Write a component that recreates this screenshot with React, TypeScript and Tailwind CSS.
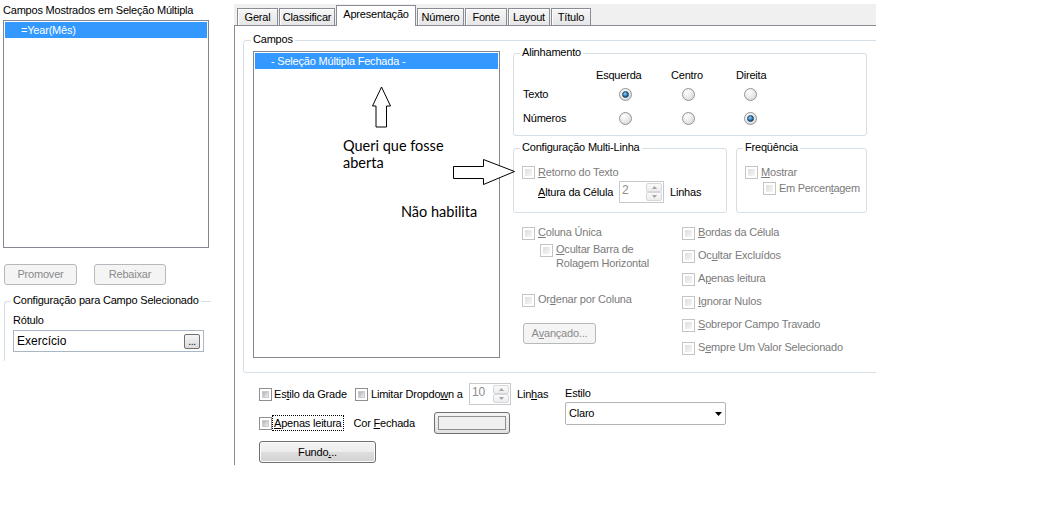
import type { ReactNode } from 'react';

const gray = 'text-[#7b7b7b]';

function Check({ off = false }: { off?: boolean }) {
  return (
    <span
      className={`flex w-[13px] h-[13px] shrink-0 border p-[2px] bg-white ${
        off ? 'border-[#c4c4c4]' : 'border-[#8e8f8f]'
      }`}
    >
      <span
        className={`flex-1 ${
          off
            ? 'bg-[linear-gradient(135deg,#dedede,#f6f6f6)]'
            : 'bg-[linear-gradient(135deg,#aeb2b7,#eeeeee)] border border-[#c8cbcf]'
        }`}
      />
    </span>
  );
}

function Radio({ on = false }: { on?: boolean }) {
  return (
    <span className="flex items-center justify-center w-[13px] h-[13px] shrink-0 rounded-full border border-[#939393] bg-[radial-gradient(circle_at_35%_30%,#ffffff,#d2d2d2)]">
      {on && (
        <span className="w-[7px] h-[7px] rounded-full border border-[#17456b] bg-[radial-gradient(circle_at_40%_35%,#8fd6ff,#0d5a97_70%)]" />
      )}
    </span>
  );
}

function Btn({ children, off = false, className = '' }: { children: ReactNode; off?: boolean; className?: string }) {
  return (
    <div
      className={`flex items-center justify-center rounded-[3px] border leading-[13px] ${
        off
          ? 'border-[#b5b9bc] bg-[#f4f4f4] text-[#8a8a8a]'
          : 'border-[#707070] bg-[linear-gradient(to_bottom,#f4f4f4,#ececec_50%,#dedede_50%,#d2d2d2)] shadow-[inset_0_0_0_1px_#fbfbfb]'
      } ${className}`}
    >
      {children}
    </div>
  );
}

function Spin({ value, className = '' }: { value: string; className?: string }) {
  return (
    <div className={`flex shrink-0 border border-[#c6cacf] bg-white ${className}`}>
      <span className="flex-1 pl-[2px] pt-[1px] text-[12px] leading-[14px] text-[#8d8d8d]">{value}</span>
      <div className="flex flex-col w-[17px] py-[1px] pr-[1px]">
        <span className="flex-1 flex items-center justify-center border border-[#d6d8db] rounded-[2px] bg-[linear-gradient(#fafafa,#ececec)]">
          <svg width="5" height="3" viewBox="0 0 5 3">
            <path d="M0 3L2.5 0L5 3Z" fill="#a4a4a4" />
          </svg>
        </span>
        <span className="flex-1 flex items-center justify-center border border-[#d6d8db] rounded-[2px] bg-[linear-gradient(#fafafa,#ececec)]">
          <svg width="5" height="3" viewBox="0 0 5 3">
            <path d="M0 0L2.5 3L5 0Z" fill="#a4a4a4" />
          </svg>
        </span>
      </div>
    </div>
  );
}

function Group({
  label,
  className = '',
  legendLeft = 'left-[6px]',
  children,
}: {
  label: string;
  className?: string;
  legendLeft?: string;
  children?: ReactNode;
}) {
  return (
    <div className={`relative shrink-0 border border-[#d5dfe5] rounded-[3px] ${className}`}>
      <span className={`absolute -top-[8px] ${legendLeft} bg-white px-[2px] leading-[13px]`}>{label}</span>
      {children}
    </div>
  );
}

function CheckRow({ children, className = '' }: { children: ReactNode; className?: string }) {
  return (
    <div className={`flex items-start h-[13px] ${className}`}>
      <Check off />
      <span className={`ml-[3px] leading-[11px] whitespace-nowrap ${gray}`}>{children}</span>
    </div>
  );
}

const tabs = [
  { label: 'Geral', w: 'w-[41px]' },
  { label: 'Classificar', w: 'w-[56px]' },
  { label: 'Apresentação', w: 'w-[80px]', active: true },
  { label: 'Número', w: 'w-[47px]' },
  { label: 'Fonte', w: 'w-[42px]' },
  { label: 'Layout', w: 'w-[42px]' },
  { label: 'Título', w: 'w-[40px]' },
];

export default function App() {
  return (
    <div className="relative flex w-[1039px] h-[529px] overflow-hidden bg-white text-black text-[11px] tracking-[-0.2px] font-['Liberation_Sans',Arial,sans-serif]">
      {/* Left: fields shown */}
      <div className="w-[211px] shrink-0 overflow-hidden flex flex-col">
        <p className="mt-[3px] pl-[3px] leading-[14px] whitespace-nowrap">Campos Mostrados em Seleção Múltipla</p>
        <div className="mt-[3px] ml-[3px] w-[206px] h-[228px] border border-[#828790] p-[1px]">
          <div className="h-[16px] bg-[#3399ff] text-white pl-[16px] leading-[16px]">=Year(Mês)</div>
        </div>
        <div className="flex mt-[16px]">
          <Btn off className="ml-[4px] w-[73px] h-[21px]">Promover</Btn>
          <Btn off className="ml-[17px] w-[72px] h-[21px]">Rebaixar</Btn>
        </div>
        <div className="relative mt-[16px] ml-[4px] w-[230px] h-[60px] border-l border-t border-[#d5dfe5] rounded-tl-[3px]">
          <span className="absolute -top-[8px] left-[6px] bg-white px-[2px] leading-[13px] whitespace-nowrap">
            Configuração para Campo Selecionado
          </span>
          <p className="pt-[12px] pl-[8px] leading-[13px]">Rótulo</p>
          <div className="mt-[3px] ml-[8px] w-[191px] h-[22px] border border-[#a9b6c4] flex items-center">
            <span className="pl-[3px] text-[12px] tracking-normal">Exercício</span>
            <div className="ml-auto mr-[3px] w-[16px] h-[15px] rounded-[2px] border border-[#707070] bg-[linear-gradient(#f4f4f4,#dcdcdc)] flex items-end justify-center text-[10px] leading-[10px] pb-[1px]">
              ...
            </div>
          </div>
        </div>
      </div>

      {/* Right: tab control */}
      <div className="ml-[23px] w-[642px] shrink-0 flex flex-col pt-[4px]">
        <div className="flex items-end gap-[1px] h-[22px] pl-[3px] bg-[#f0f0f0] border-b border-[#898c95]">
          {tabs.map((t) =>
            t.active ? (
              <div
                key={t.label}
                className={`${t.w} relative z-10 h-[21px] -mb-px flex items-center justify-center pb-[3px] bg-white border border-b-0 border-[#898c95]`}
              >
                {t.label}
              </div>
            ) : (
              <div
                key={t.label}
                className={`${t.w} h-[17px] flex items-center justify-center border border-b-0 border-[#898c95] bg-[linear-gradient(to_bottom,#f6f6f6,#e6e6e6)] shadow-[inset_1px_1px_0_#ffffff]`}
              >
                {t.label}
              </div>
            )
          )}
        </div>

        <div className="h-[439px] border-l border-[#898c95] overflow-hidden flex flex-col">
          <Group label="Campos" legendLeft="left-[7px]" className="mt-[14px] ml-[8px] w-[700px] h-[333px]">
            <div className="flex items-start">
              <div className="mt-[10px] ml-[9px] w-[247px] h-[307px] shrink-0 border border-[#828790] p-[1px]">
                <div className="h-[16px] bg-[#3399ff] text-white pl-[16px] leading-[16px]">- Seleção Múltipla Fechada -</div>
              </div>

              <div className="ml-[13px] mt-[12px] flex flex-col">
                <Group label="Alinhamento" className="w-[354px] h-[83px]">
                  <div className="flex pt-[15px] pl-[82px] leading-[13px]">
                    <span className="w-[75px]">Esquerda</span>
                    <span className="w-[65px]">Centro</span>
                    <span>Direita</span>
                  </div>
                  <div className="flex items-center mt-[6px] pl-[9px] h-[13px]">
                    <span className="w-[96px]">Texto</span>
                    <Radio on />
                    <span className="ml-[50px]"><Radio /></span>
                    <span className="ml-[49px]"><Radio /></span>
                  </div>
                  <div className="flex items-center mt-[11px] pl-[9px] h-[13px]">
                    <span className="w-[96px]">Números</span>
                    <Radio />
                    <span className="ml-[50px]"><Radio /></span>
                    <span className="ml-[49px]"><Radio on /></span>
                  </div>
                </Group>

                <div className="flex mt-[12px]">
                  <Group label="Configuração Multi-Linha" className="w-[214px] h-[65px]">
                    <div className="flex items-center pt-[17px] pl-[8px]">
                      <Check off />
                      <span className={`ml-[3px] leading-[13px] ${gray}`}>
                        <u>R</u>etorno do Texto
                      </span>
                    </div>
                    <div className="flex items-center mt-[2px] pl-[24px]">
                      <span className="w-[81px] whitespace-nowrap">
                        <u>A</u>ltura da Célula
                      </span>
                      <Spin value="2" className="w-[45px] h-[22px]" />
                      <span className="ml-[6px]">Linhas</span>
                    </div>
                  </Group>
                  <Group label="Freqüência" className="ml-[9px] w-[131px] h-[65px]">
                    <div className="flex items-center pt-[17px] pl-[8px]">
                      <Check off />
                      <span className={`ml-[3px] leading-[13px] ${gray}`}>
                        <u>M</u>ostrar
                      </span>
                    </div>
                    <div className="flex items-center mt-[3px] pl-[26px]">
                      <Check off />
                      <span className={`ml-[3px] leading-[13px] whitespace-nowrap tracking-[-0.3px] ${gray}`}>
                        Em Percen<u>t</u>agem
                      </span>
                    </div>
                  </Group>
                </div>

                <div className="flex mt-[14px] pl-[9px]">
                  <div className="w-[160px] flex flex-col">
                    <CheckRow>
                      <u>C</u>oluna Única
                    </CheckRow>
                    <div className="flex items-start mt-[4px] pl-[18px]">
                      <Check off />
                      <span className={`ml-[3px] -mt-[2px] leading-[14px] ${gray}`}>
                        <u>O</u>cultar Barra de
                        <br />
                        Rolagem Horizontal
                      </span>
                    </div>
                    <CheckRow className="mt-[24px]">
                      Or<u>d</u>enar por Coluna
                    </CheckRow>
                    <Btn off className="mt-[16px] ml-[1px] w-[73px] h-[21px]">
                      A<u>v</u>ançado...
                    </Btn>
                  </div>
                  <div className="flex flex-col gap-[10px]">
                    <CheckRow>
                      <u>B</u>ordas da Célula
                    </CheckRow>
                    <CheckRow>
                      Oc<u>u</u>ltar Excluídos
                    </CheckRow>
                    <CheckRow>
                      A<u>p</u>enas leitura
                    </CheckRow>
                    <CheckRow>
                      <u>I</u>gnorar Nulos
                    </CheckRow>
                    <CheckRow>
                      <u>S</u>obrepor Campo Travado
                    </CheckRow>
                    <CheckRow>
                      S<u>e</u>mpre Um Valor Selecionado
                    </CheckRow>
                  </div>
                </div>
              </div>
            </div>
          </Group>

          {/* Bottom options */}
          <div className="flex mt-[10px] pl-[24px]">
            <div className="w-[306px] shrink-0 flex flex-col">
              <div className="flex items-center h-[22px]">
                <Check />
                <span className="ml-[2px] w-[81px] whitespace-nowrap">
                  Es<u>t</u>ilo da Grade
                </span>
                <Check />
                <span className="ml-[3px] w-[98px] whitespace-nowrap">
                  Limitar Dropdo<u>w</u>n a
                </span>
                <Spin value="10" className="w-[42px] h-[22px]" />
                <span className="ml-[6px]">
                  Lin<u>h</u>as
                </span>
              </div>
              <div className="flex items-center mt-[7px] h-[22px]">
                <Check />
                <span className="px-[1px] h-[16px] leading-[14px] border border-dotted border-black whitespace-nowrap">
                  <u>A</u>penas leitura
                </span>
                <span className="ml-[10px] w-[80px] whitespace-nowrap">
                  Cor <u>F</u>echada
                </span>
                <div className="w-[76px] h-[22px] rounded-[3px] border border-[#707070] bg-[linear-gradient(#f4f4f4,#e2e2e2)] p-[3px]">
                  <div className="h-full border border-[#8f8f8f] bg-[#f0f0f0]" />
                </div>
              </div>
              <Btn className="mt-[7px] w-[117px] h-[22px]">
                <span>
                  Fundo<u>.</u>..
                </span>
              </Btn>
            </div>
            <div className="flex flex-col mt-[4px]">
              <span className="leading-[13px]">Estilo</span>
              <div className="mt-[2px] w-[161px] h-[23px] border border-[#b3b3b3] rounded-[2px] bg-white flex items-center pl-[3px] pr-[3px]">
                <span>Claro</span>
                <svg className="ml-auto" width="7" height="4" viewBox="0 0 7 4">
                  <path d="M0 0H7L3.5 4Z" fill="#000" />
                </svg>
              </div>
            </div>
          </div>
        </div>
      </div>

      {/* Annotations drawn over the dialog */}
      <svg className="absolute left-[370px] top-[85px]" width="23" height="44" viewBox="0 0 23 44">
        <polygon points="11.5,2 2.5,21 6,21 6,42 16.5,42 16.5,21 20.5,21" fill="white" stroke="black" strokeWidth="1" />
      </svg>
      <svg className="absolute left-[450px] top-[156px]" width="70" height="32" viewBox="0 0 70 32">
        <polygon points="3.5,10.5 33.5,10.5 33.5,3.5 64.5,15.5 33.5,28.5 33.5,22.5 3.5,22.5" fill="white" stroke="black" strokeWidth="1" />
      </svg>
      <p className="absolute left-[343px] top-[137px] text-[14.5px] leading-[17px] tracking-normal font-['Lato',sans-serif]">
        Queri que fosse
        <br />
        aberta
      </p>
      <p className="absolute left-[401px] top-[203px] text-[14.5px] leading-[17px] tracking-normal font-['Lato',sans-serif]">
        Não habilita
      </p>
    </div>
  );
}
